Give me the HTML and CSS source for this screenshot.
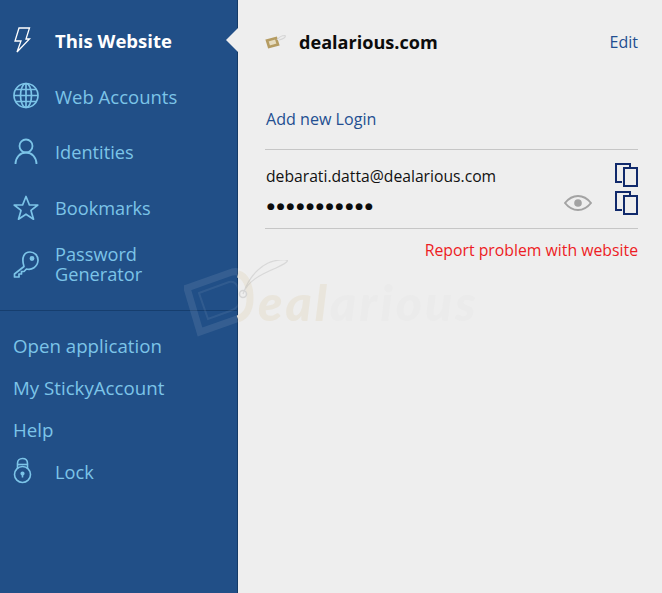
FILE: index.html
```html
<!DOCTYPE html>
<html lang="en">
<head>
<meta charset="utf-8">
<title>This Website</title>
<link rel="stylesheet" href="styles.css">
</head>
<body>
<div class="app">
  <nav class="sidebar">
    <ul class="nav-main">
      <li class="nav-item active">
        <svg class="nav-icon" width="30" height="30" viewBox="0 0 30 30" fill="none" stroke="#fff" stroke-width="1.3" stroke-linejoin="miter"><path d="M8 3H18.5L15 14H18.5L6 27L10 16H4Z"/></svg>
        <span>This Website</span>
      </li>
      <li class="nav-item">
        <svg class="nav-icon" width="30" height="30" viewBox="0 0 30 30" fill="none" stroke="#7cc4e8" stroke-width="1.7"><circle cx="15" cy="14.5" r="12"/><ellipse cx="15" cy="14.5" rx="5.5" ry="12"/><path d="M15 2.5V26.5M3 14.5H27M4.8 8.5H25.2M4.8 20.5H25.2"/></svg>
        <span class="wide">Web Accounts</span>
      </li>
      <li class="nav-item">
        <svg class="nav-icon" width="30" height="30" viewBox="0 0 30 30" fill="none" stroke="#7cc4e8" stroke-width="1.8"><circle cx="15" cy="9" r="6.5"/><path d="M4.5 27C4.5 20.5 9 15.5 15 15.5S25.5 20.5 25.5 27"/></svg>
        <span>Identities</span>
      </li>
      <li class="nav-item">
        <svg class="nav-icon" width="30" height="30" viewBox="0 0 30 30" fill="none" stroke="#7cc4e8" stroke-width="1.7" stroke-linejoin="round"><path d="M15 3.5L18.4 12H26.8L20 17.4L22.5 26.2L15 21.2L7.5 26.2L10 17.4L3.2 12H11.6Z"/></svg>
        <span>Bookmarks</span>
      </li>
      <li class="nav-item two-line">
        <svg class="nav-icon" width="30" height="30" viewBox="0 0 30 30" fill="none" stroke="#7cc4e8" stroke-width="1.7" stroke-linejoin="round"><path d="M13 17.5L3.5 25V28H8V25H10.5V22.5H13L15.5 20C20.5 21.5 26.5 18 27 11.5C27.2 6.5 23.5 3 19 3C13.5 3 10 8 13 17.5Z"/><circle cx="21" cy="9.5" r="1.6" fill="#7cc4e8"/></svg>
        <span>Password<br>Generator</span>
      </li>
    </ul>
    <ul class="nav-secondary">
      <li class="nav-link">Open application</li>
      <li class="nav-link">My StickyAccount</li>
      <li class="nav-link">Help</li>
      <li class="nav-link lock">
        <svg class="nav-icon" width="30" height="30" viewBox="0 0 30 30" fill="none" stroke="#7cc4e8" stroke-width="1.6"><circle cx="11.5" cy="18.5" r="8"/><path d="M6.5 12.5V7.5C6.5 4.5 8.5 2.5 11.5 2.5S16.5 4.5 16.5 7.5V12.5"/><path d="M6.5 8.5H16.5"/><circle cx="11.5" cy="17.5" r="1.3" fill="#7cc4e8"/><path d="M11.5 18V21.5"/></svg>
        <span class="lock-label">Lock</span>
      </li>
    </ul>
  </nav>
  <main class="content">
    <header class="site-head">
      <div class="site-name">
        <svg class="favicon" width="22" height="16" viewBox="0 0 22 16" fill="none"><path d="M2 6.5L11 4L13 10.5L4 13Z" fill="#e6dcc0" stroke="#b59c62" stroke-width="2.6"/><path d="M12 6C14 3 17 1.5 20 1.5C21.5 3 18 5 14 6" stroke="#d6d6d6" stroke-width="1.1"/></svg>
        <strong>dealarious.com</strong>
      </div>
      <a class="link">Edit</a>
    </header>
    <a class="link add-login">Add new Login</a>
    <section class="login">
      <div class="login-row">
        <span class="login-value">debarati.datta@dealarious.com</span>
        <svg class="copy" width="24" height="25" viewBox="0 0 24 25" fill="none" stroke="#10296b" stroke-width="2"><path d="M16 5V2H2V20H8"/><rect x="10" y="6" width="13" height="18"/></svg>
      </div>
      <div class="login-row">
        <span class="dots">●●●●●●●●●●●</span>
        <svg class="eye" width="28" height="18" viewBox="0 0 28 18" fill="none" stroke="#a3a3a3" stroke-width="2"><path d="M1 9C5 4 9 2 14 2S23 4 27 9C23 14 19 16 14 16S5 14 1 9Z"/><circle cx="14" cy="9" r="3.8" fill="#a3a3a3" stroke="none"/></svg>
        <svg class="copy" width="24" height="25" viewBox="0 0 24 25" fill="none" stroke="#10296b" stroke-width="2"><path d="M16 5V2H2V20H8"/><rect x="10" y="6" width="13" height="18"/></svg>
      </div>
    </section>
    <a class="report">Report problem with website</a>
  </main>
  <div class="watermark" aria-hidden="true">
    <svg class="wm-tag" width="110" height="90" viewBox="0 0 110 90" fill="none">
      <path d="M3 28L48 12C62 9 66 25 66 38C66 52 60 57 50 60L16 72Z" stroke="#fff" stroke-opacity=".09" stroke-width="7"/>
      <path d="M15 33L45 22C53 20 56 30 56 38C56 46 52 49 46 51L24 59Z" stroke="#fff" stroke-opacity=".07" stroke-width="2"/>
      <path d="M54 14C62 16 66 26 66 38C66 50 62 56 54 59" stroke="#e9e5dc" stroke-width="7"/>
      <path d="M59 34C63 22 75 15 92 8C107 1 106 -1 96 0C80 1 66 14 59 34" stroke="#999" stroke-opacity=".25" stroke-width="1.2"/>
      <circle cx="59" cy="34" r="3.5" stroke="#d4d4d4" stroke-width="1.5"/>
    </svg>
    <span class="wm-a">eal</span><span class="wm-b">arious</span>
  </div>
</div>
</body>
</html>
```

FILE: styles.css
```css
* { box-sizing: border-box; }
html, body { margin: 0; padding: 0; }
body {
  width: 662px;
  height: 593px;
  overflow: hidden;
  font-family: "Open Sans", "Noto Sans", sans-serif;
  background: #eeeeee;
}
ul { list-style: none; margin: 0; padding: 0; }
.app { position: relative; display: flex; width: 662px; height: 593px; }
.sidebar {
  flex: 0 0 238px;
  background: #214f87;
  border-right: 1px solid #143a66;
  color: #7cc4e8;
  font-size: 18.2px;
}
.nav-main {
  height: 311px;
  padding-top: 12px;
  border-bottom: 1px solid #163e6e;
}
.nav-item {
  position: relative;
  display: flex;
  align-items: center;
  height: 56px;
  padding-left: 11px;
  gap: 14px;
}
.nav-icon { flex: none; }
.wide { font-size: 18.5px; padding-top: 1px; }
.nav-item.active { color: #fff; font-weight: 700; font-size: 18.5px; }
.nav-item.active::after {
  content: "";
  position: absolute;
  right: -1px;
  top: 16px;
  border: 12px solid transparent;
  border-left: 0;
  border-right-color: #eeeeee;
}
.two-line { line-height: 20px; }
.nav-secondary { padding-top: 13px; }
.nav-link {
  display: flex;
  align-items: center;
  height: 42px;
  padding-left: 13px;
  font-size: 18.7px;
}
.lock { padding-left: 11px; gap: 14px; font-size: 18.2px; }
.lock-label { padding-top: 1px; }
.content {
  flex: 1;
  padding: 0 24px 0 27px;
  color: #111;
  font-size: 16px;
}
.site-head {
  display: flex;
  align-items: center;
  justify-content: space-between;
  height: 84px;
}
.site-name { display: flex; align-items: center; gap: 12px; }
.site-name strong { font-size: 18.1px; font-weight: 700; color: #0c0c0c; }
.favicon { flex: none; }
.link { color: #234f91; font-size: 16px; }
.add-login { display: block; margin-top: 23px; padding-left: 1px; line-height: 24px; font-size: 16.1px; }
.login {
  margin-top: 18px;
  height: 80px;
  border-top: 1px solid #c6c6c6;
  border-bottom: 1px solid #c6c6c6;
  padding-top: 12px;
}
.login-row {
  display: flex;
  align-items: center;
  height: 28px;
}
.login-value { flex: 1; padding-left: 1px; font-size: 15.7px; }
.copy { flex: none; align-self: flex-start; }
.dots {
  flex: 1;
  padding: 4px 0 0 2px;
  font-family: "DejaVu Sans", sans-serif;
  font-size: 9px;
  letter-spacing: 1.95px;
  color: #0c0c0c;
}
.eye { flex: none; margin: -2px 22px 0 0; }
.report {
  display: block;
  margin-top: 9px;
  text-align: right;
  color: #ed1c24;
  font-size: 15.8px;
  line-height: 24px;
}
.watermark {
  position: absolute;
  left: 184px;
  top: 260px;
  display: flex;
  align-items: flex-end;
  height: 72px;
  pointer-events: none;
  font-family: "Lato", sans-serif;
  font-weight: 900;
  font-style: italic;
  font-size: 50px;
  line-height: 60px;
  letter-spacing: 3px;
}
.wm-tag { position: absolute; left: 0; top: 0; }
.wm-a { margin-left: 74px; color: #e9e5dc; }
.wm-b { color: #ebebeb; }
```
